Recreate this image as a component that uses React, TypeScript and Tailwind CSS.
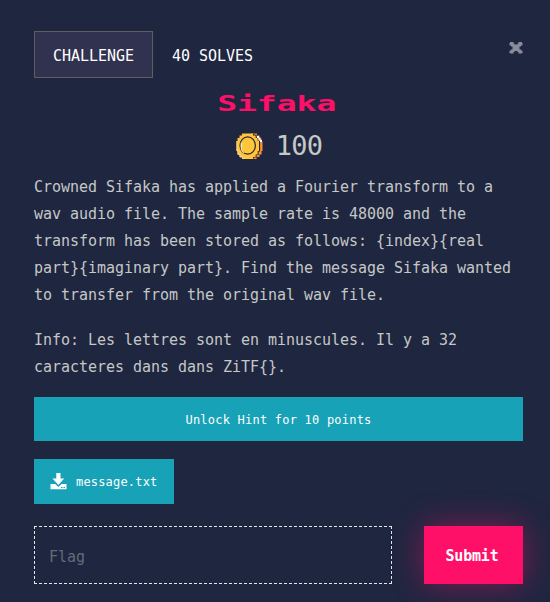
import type { ReactNode } from "react"

function CloseIcon() {
  return (
    <svg width="14" height="12" viewBox="0 0 14 12" fill="#888c9d">
      <path d="M1 0h3.500v1.500h1v1h3v-1h1V0H13v1h.5v2.500H12v1h-1.500v3H12v1h1.500V11H13v.5H9.500V10h-1V9h-3v1h-1v1.500H1V11H.5V8.500H2v-1h1.500v-3H2v-1H.5V1H1z" />
    </svg>
  )
}

function CoinIcon() {
  return (
    <svg className="ml-px" width="27" height="26" viewBox="0 0 27 26">
      <path fill="#f8922e" d="M15 .5h6v2h2.500v3h2v3h1V18h-1v3.500h-2V24h-3v2H15z" />
      <path
        fill="none"
        stroke="#2a2430"
        strokeWidth="1.200"
        d="M17.500.8v1.500H20v2.500h2V8h1.500v10H22v3.500h-2V24h-2.500v1.500"
      />
      <path fill="#fff" d="M21 3h2v1.500h1.500V7H26v2h-2V7.500h-1.500V5H21z" />
      <path fill="#ffc53b" d="M6 .5h11v2h2.500V5h2v3h1.500v10h-1.500v3.500h-2V24H17v2H6v-2H3.500v-2.500h-2V18H.5V8h1V5h2V2.500H6z" />
      <path fill="none" stroke="#f3d498" d="M1 8v10h1v3.500h2V24h2.500v1.500H9" />
      <ellipse cx="11.700" cy="12.500" rx="7.700" ry="8.700" fill="none" stroke="#2b2935" strokeWidth="1.200" />
      <path fill="none" stroke="#fff4d8" d="M5.200 9.500v6l1 2.500 2 2" />
    </svg>
  )
}

function DownloadIcon() {
  return (
    <svg width="17" height="17" viewBox="0 0 17 17" fill="#fff">
      <path d="M6.300 0h4.200v5.500h3.700L8.400 12 2.500 5.500h3.800z" />
      <path d="M.5 11h4.700l3.200 2.900 3.200-2.900h4.900v5.300H.5z" />
      <path fill="#18a2b8" d="M11 14h1.500v1H11zM13.500 14H15v1h-1.500z" />
    </svg>
  )
}

function Paragraph({ children }: { children: ReactNode }) {
  return (
    <p className="mb-[18px] whitespace-nowrap text-[15px] leading-[27px] tracking-[-0.03px]">
      {children}
    </p>
  )
}

export default function App() {
  return (
    <div className="h-[602px] w-[550px] overflow-hidden bg-[#1f2640] pl-[34px] pr-[27px] pt-[31px] font-['DejaVu_Sans_Mono',monospace] text-[#c5c8c6]">
      <header className="flex h-[47px] items-start text-[15px] tracking-[-0.03px] text-white">
        <div className="flex h-[47px] w-[119px] items-center justify-center border border-[#5f5f62] bg-[#303250] pt-[3px]">
          CHALLENGE
        </div>
        <div className="flex h-[47px] items-center pl-[19px] pt-[3px]">40 SOLVES</div>
        <button className="ml-auto mt-[11px]" aria-label="Close">
          <CloseIcon />
        </button>
      </header>

      <h3 className="mt-[9px] flex h-[32px] items-center justify-center pr-[4px] text-[22px] font-bold text-[#ff1068]">
        <span className="scale-x-150">Sifaka</span>
      </h3>

      <div className="mt-[9px] flex h-[36px] items-center justify-center gap-[13px]">
        <CoinIcon />
        <span className="pb-[2px] text-[27px] leading-none tracking-[-0.8px]">100</span>
      </div>

      <div className="mt-[10px]">
        <Paragraph>
          Crowned Sifaka has applied a Fourier transform to a<br />
          wav audio file. The sample rate is 48000 and the<br />
          transform has been stored as follows: {"{index}{real"}
          <br />
          {"part}{imaginary part}"}. Find the message Sifaka wanted<br />
          to transfer from the original wav file.
        </Paragraph>
        <Paragraph>
          Info: Les lettres sont en minuscules. Il y a 32<br />
          caracteres dans dans ZiTF{"{}"}.
        </Paragraph>
      </div>

      <button className="mt-[-2px] flex h-[44px] w-full items-center justify-center bg-[#18a2b8] pt-[2px] text-[12px] tracking-[0.22px] text-white">
        Unlock Hint for 10 points
      </button>

      <button className="mt-[18px] flex h-[45px] w-[140px] items-center gap-[9px] bg-[#18a2b8] pl-4 text-[12px] tracking-[0.18px] text-white">
        <DownloadIcon />
        <span className="pt-px">message.txt</span>
      </button>

      <form className="mt-[22px] flex justify-between">
        <input
          className="h-[58px] w-[358px] border border-dashed border-[#e4e6e8] px-[14px] pt-[3px] text-[15px] tracking-[-0.03px] outline-none placeholder:text-[#626b79]"
          placeholder="Flag"
        />
        <button
          type="button"
          className="h-[58px] w-[99px] bg-[#ff1068] pr-[3px] pt-[3px] text-[15px] font-bold tracking-[-0.2px] text-white shadow-[0_0_32px_rgba(255,16,104,0.45)]"
        >
          Submit
        </button>
      </form>
    </div>
  )
}
